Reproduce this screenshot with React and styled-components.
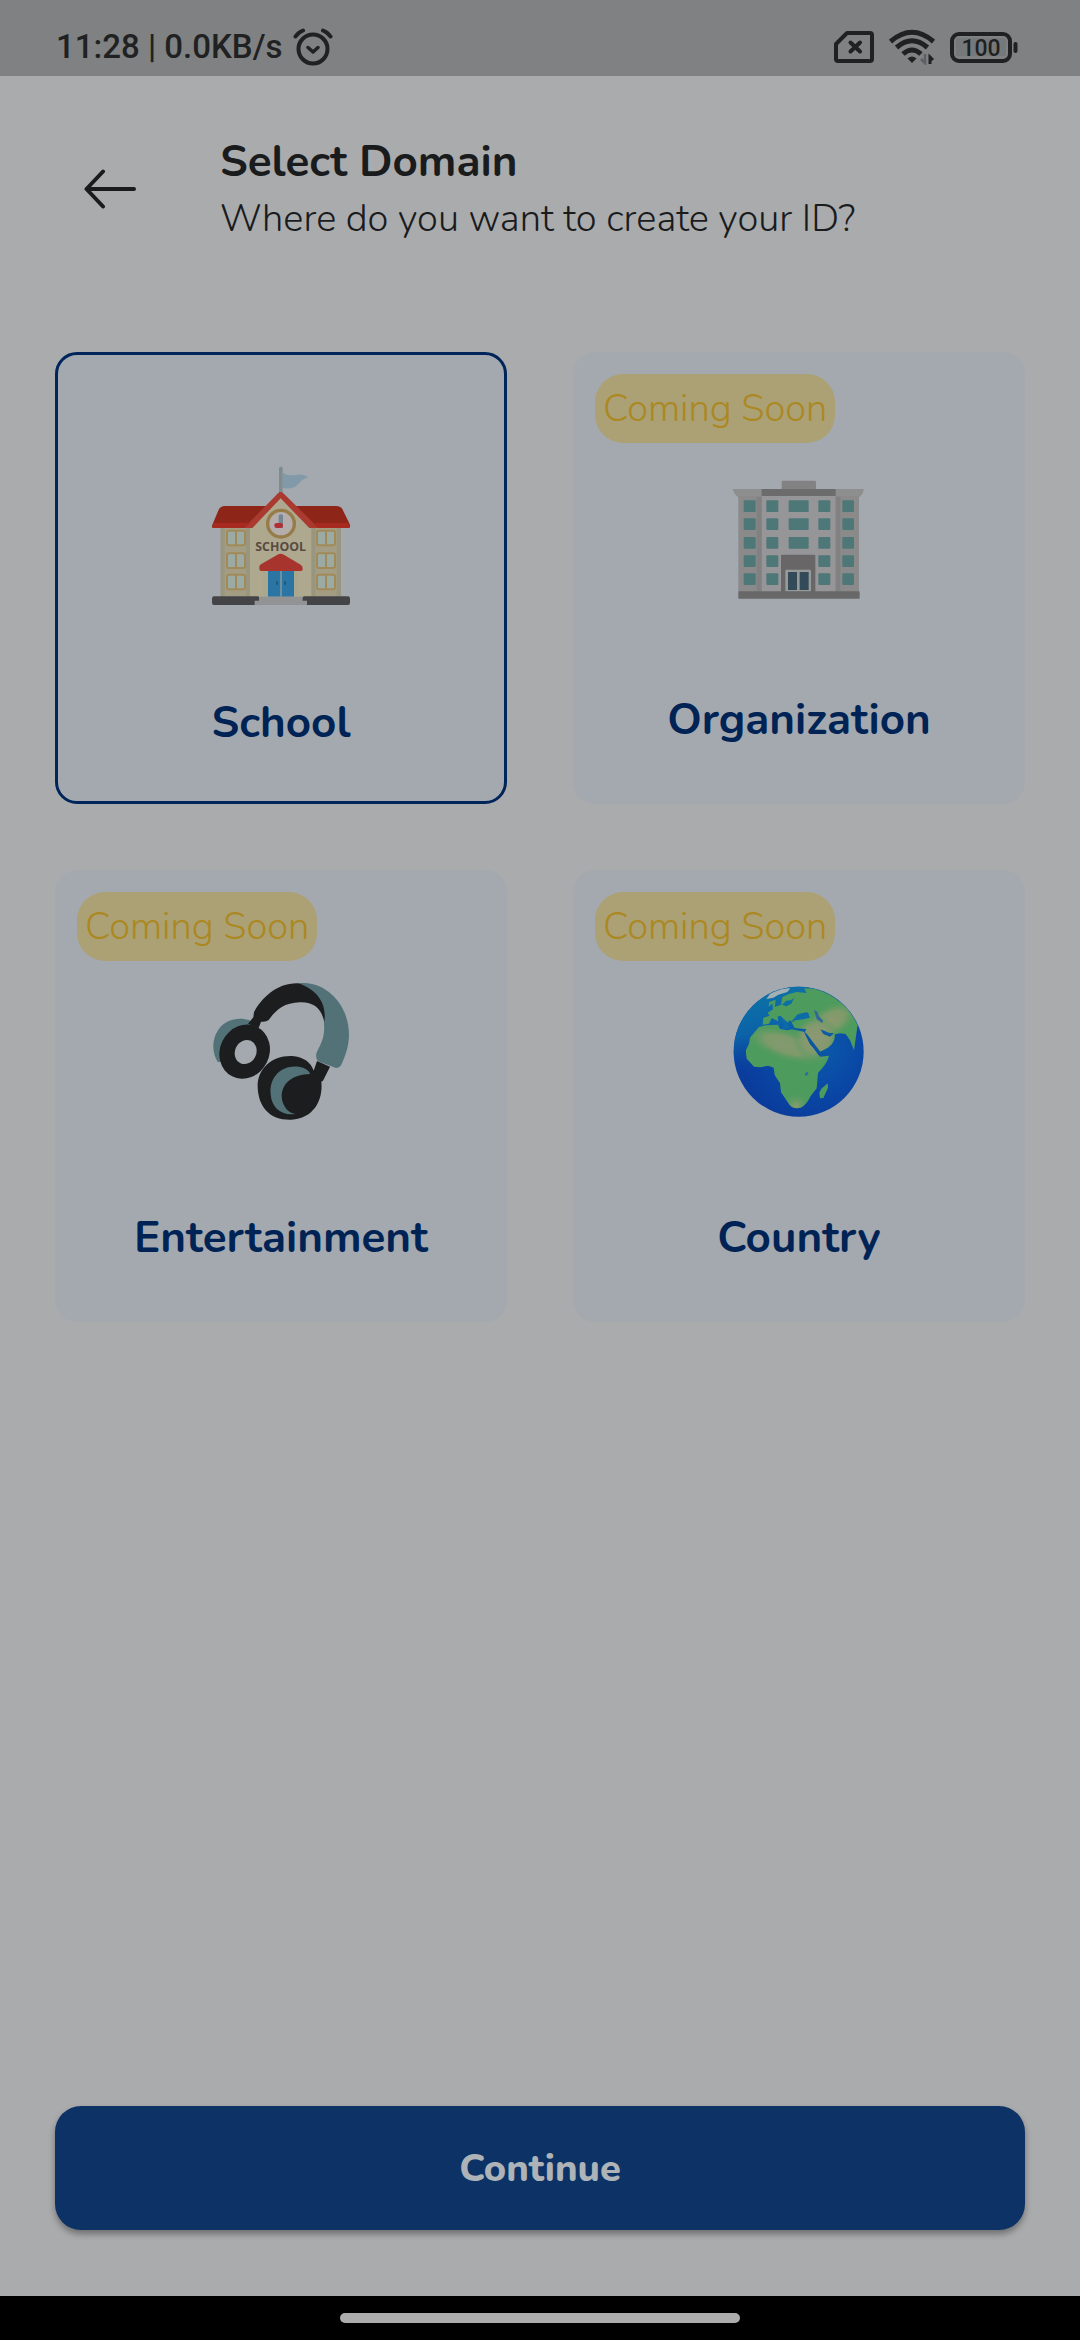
import React, { useState } from "react";
import styled, { createGlobalStyle } from "styled-components";

const GlobalStyle = createGlobalStyle`
  *, *::before, *::after { box-sizing: border-box; }
  body {
    margin: 0;
    background: #aaabad;
    font-family: Nunito, "Open Sans", "Noto Sans", sans-serif;
    color: #191b1d;
  }
  button { font: inherit; color: inherit; border: 0; background: none; padding: 0; cursor: pointer; }
`;

const Screen = styled.div`
  min-height: 100vh;
  display: flex;
  flex-direction: column;
`;

const StatusBar = styled.div`
  height: 76px;
  padding: 18px 62px 0 56px;
  display: flex;
  align-items: center;
  justify-content: space-between;
  background: #7f8182;
  color: #1f2122;
  font-family: Roboto, sans-serif;
`;

const StatusGroup = styled.div`
  display: flex;
  align-items: center;
  gap: ${(p) => p.$gap}px;
`;

const Clock = styled.span`
  font-size: 33px;
  line-height: 38px;
  font-weight: 500;
`;

const Header = styled.header`
  display: flex;
  align-items: center;
  gap: 72px;
  padding: 56px 72px 0;
`;

const BackButton = styled.button`
  display: flex;
  width: 76px;
  height: 76px;
  align-items: center;
  justify-content: center;
`;

const Title = styled.h1`
  margin: 0;
  font-size: 44px;
  line-height: 60px;
  font-weight: 700;
`;

const Subtitle = styled.p`
  margin: 0;
  font-size: 38px;
  line-height: 53px;
  font-weight: 300;
`;

const DomainGrid = styled.main`
  flex: 1;
  display: grid;
  grid-template-columns: repeat(2, minmax(0, 1fr));
  align-content: start;
  gap: 66px;
  padding: 107px 55px 66px;
`;

const Card = styled.button`
  position: relative;
  display: flex;
  flex-direction: column;
  align-items: center;
  gap: 87px;
  aspect-ratio: 1;
  && {
    padding: 111px 0 0;
    border: ${(p) => (p.$selected ? "3px solid #00255a" : "0")};
    border-radius: 22px;
    background: #a3a9af;
  }
`;

const Badge = styled.span`
  position: absolute;
  top: 22px;
  left: 22px;
  padding: 8px;
  border-radius: 28px;
  background: #aca174;
  color: #ab8822;
  font-size: 38px;
  line-height: 53px;
  font-weight: 300;
`;

const CardLabel = styled.span`
  color: #002355;
  font-size: 44px;
  line-height: 60px;
  font-weight: 700;
`;

const Footer = styled.footer`
  display: flex;
  padding: 0 55px 66px;
`;

const ContinueButton = styled.button`
  flex: 1;
  height: 124px;
  && {
    border-radius: 26px;
    background: #0c3266;
    color: #adb3b7;
    font-size: 38px;
    line-height: 53px;
    font-weight: 800;
  }
  box-shadow: 0 4px 6px rgba(0, 0, 0, 0.35);
`;

const NavBar = styled.div`
  height: 44px;
  display: flex;
  align-items: center;
  justify-content: center;
  background: #000;
`;

const HomeHandle = styled.div`
  width: 37%;
  height: 10px;
  border-radius: 5px;
  background: #acacac;
`;

const AlarmIcon = () => (
  <svg width="40" height="40" viewBox="0 0 40 40" fill="none" stroke="currentColor" strokeWidth="4" strokeLinecap="round">
    <circle cx="20" cy="22" r="14.5" />
    <path d="M2.5 9.5 Q5 5.500 10 3.500M37.500 9.500 Q35 5.500 30 3.500" />
    <path d="M15 20.500 20 25 25 20.500" strokeLinejoin="round" strokeWidth="3.500" />
  </svg>
);

const SimIcon = () => (
  <svg width="40" height="32" viewBox="0 0 40 32" fill="none" stroke="currentColor" strokeWidth="4" strokeLinejoin="round">
    <path d="M13 2H36Q38 2 38 4V28Q38 30 36 30H4Q2 30 2 28V13Z" />
    <path d="M16.500 11.500 26 20.500M26 11.500 16.500 20.500" strokeWidth="4" strokeLinecap="round" />
  </svg>
);

const WifiIcon = () => (
  <svg width="46" height="36" viewBox="0 0 46 36" fill="none" stroke="currentColor" strokeWidth="5">
    <path d="M1.500 12.500Q23 -6 44.500 12.500M7.500 18.500Q23 5 38.500 18.500M14 25Q23 17 32 25" />
    <path d="M18.500 29.500Q23 25.500 27.500 29.500L23 34Z" fill="currentColor" stroke="none" />
    <path d="M36 25V34L32 30" stroke="#5c5f65" strokeWidth="2.500" />
    <path d="M41 35V28L44 31" strokeWidth="3" />
  </svg>
);

const BatteryIcon = () => (
  <svg width="68" height="31" viewBox="0 0 68 31" fill="none">
    <rect x="6" y="6" width="50" height="18" fill="#76797a" />
    <rect x="2" y="2" width="58" height="27" rx="7" stroke="currentColor" strokeWidth="4" />
    <rect x="63.500" y="10" width="4" height="11" rx="2" fill="currentColor" />
    <text x="31" y="24" textAnchor="middle" fill="currentColor" fontFamily="Roboto, sans-serif" fontSize="23" fontWeight="500">100</text>
  </svg>
);

const ArrowIcon = () => (
  <svg width="52" height="40" viewBox="0 0 52 40" fill="none" stroke="currentColor" strokeWidth="4" strokeLinecap="round" strokeLinejoin="round">
    <path d="M50 20H2.500M19 2.500 2.500 20 19 37.500" />
  </svg>
);

const SchoolArt = () => (
  <svg width="140" height="140" viewBox="63 48 420 420">
    <path d="M267 53Q272 48 278 53V130H267Z" fill="#7d8c8f" />
    <path d="M279 68C300 84 318 70 334 74Q349 75 354 84C334 82 328 106 311 112Q294 119 279 113Z" fill="#8199a9" />
    <path d="M92 225H453V440H92Z" fill="#a39d83" />
    <path d="M272 138 374 225V440H170V225Z" fill="#aea88e" />
    <path d="M92 232H104V440H92ZM440 232H453V440H440ZM168 232H180V440H168ZM364 232H376V440H364Z" fill="#999680" />
    <path d="M104 168H230L163 234H68Q64 230 68 222L86 179Q92 168 104 168ZM316 168H438Q453 168 458 179L479 222Q482 230 478 234H382Z" fill="#8d2518" />
    <path d="M162 234 264 130Q272 122 280 130L386 234H358L272 145 187 234Z" fill="#aa3a30" />
    <path d="M68 228 72 218H181L163 234H70ZM368 219H475L479 228Q480 234 474 234H384Z" fill="#a62a20" />
    <circle cx="273" cy="221" r="40" fill="#b4adab" stroke="#967c48" strokeWidth="10" />
    <path d="M266 196Q272 190 279 196V234H266Z" fill="#718894" />
    <rect x="253" y="219" width="26" height="15" rx="7" fill="#b22e35" />
    {[242, 310, 374].map((y) =>
      [111, 381].map((x) => (
        <g key={`${x}-${y}`}>
          <rect x={x} y={y} width="54" height="44" rx="6" fill="#9caaa4" stroke="#a18a57" strokeWidth="6" />
          <path d={`M${x + 27} ${y}V${y + 44}`} stroke="#a18a57" strokeWidth="6" />
        </g>
      ))
    )}
    <text x="272" y="303" textAnchor="middle" fill="#584a41" fontFamily="Open Sans, sans-serif" fontWeight="700" fontSize="37">SCHOOL</text>
    <rect x="220" y="358" width="106" height="82" fill="#aaa78f" />
    <rect x="234" y="358" width="78" height="82" fill="#2b75a5" />
    <path d="M273 358V440" stroke="#7a969f" strokeWidth="5" />
    <path d="M261 394V404M285 394V404" stroke="#205475" strokeWidth="5" />
    <path d="M208 350Q208 346 214 342L265 313Q272 309 279 313L332 344Q338 348 338 355V358Q338 363 333 363H214Q208 363 208 357Z" fill="#a8352d" />
    <path d="M72 439H203Q208 439 208 444V465H72Q66 465 66 458V446Q66 439 72 439ZM343 439H474Q480 439 480 446V458Q480 465 474 465H337V444Q337 439 343 439Z" fill="#444446" />
    <path d="M208 440H337V452H351V465H194V452H208Z" fill="#929395" />
  </svg>
);

const windowColumns = [
  { x: 86, w: 36 },
  { x: 154, w: 36 },
  { x: 310, w: 36 },
  { x: 382, w: 35 },
];

const OfficeArt = () => (
  <svg width="140" height="140" viewBox="42 9 420 420">
    <rect x="200" y="62" width="103" height="30" rx="4" fill="#828283" />
    <path d="M54 87H446Q444 103 432 112V396H70V112Q57 103 54 87Z" fill="#8a8a8b" />
    <rect x="140" y="108" width="222" height="288" fill="#969698" />
    <path d="M125 110H140V394H125ZM362 110H376V394H362Z" fill="#828182" />
    <path d="M54 87H140V108H68Q57 101 54 87ZM362 87H446Q443 101 432 108H362Z" fill="#8f8e8e" />
    <rect x="140" y="87" width="222" height="21" fill="#6c6c6c" />
    {windowColumns.map(({ x, w }) =>
      [121, 175, 231, 286, 340].map((y) => (
        <rect key={`${x}-${y}`} x={x} y={y} width={w} height="35" rx="3" fill="#4e7778" />
      ))
    )}
    {[121, 175, 231].map((y) => (
      <rect key={y} x="221" y={y} width="60" height="35" rx="2" fill="#4e7778" />
    ))}
    <rect x="198" y="284" width="103" height="112" rx="3" fill="#696668" />
    <rect x="211" y="329" width="77" height="66" rx="3" fill="#969a99" />
    <rect x="219" y="336" width="27" height="54" fill="#334a59" />
    <rect x="254" y="336" width="27" height="54" fill="#334a59" />
    <rect x="70" y="394" width="364" height="22" rx="2" fill="#686868" />
  </svg>
);

const HeadphonesArt = () => (
  <svg width="140" height="140" viewBox="63 63 420 420">
    <path d="M84 307C66 280 64 240 85 209C106 178 145 170 180 181L190 198L105 300Z" fill="#527278" />
    <path d="M192 156C215 115 260 68 325 70C380 74 407 112 411 170L405 205C402 150 374 125 330 127C280 128 257 152 236 180Q228 187 213 185L206 204L174 191L190 172Z" fill="#1c1d1e" />
    <path d="M325 70C388 60 443 107 464 158C488 220 475 270 453 316Q448 325 438 324L388 305Q376 300 379 280C389 257 406 237 402 190C414 130 378 87 325 70Z" fill="#527278" />
    <ellipse cx="164" cy="275" rx="74" ry="83" fill="#1c1d1e" transform="rotate(27 164 275)" />
    <ellipse cx="167" cy="276" rx="32" ry="37" fill="#a3a9af" transform="rotate(25 167 276)" />
    <path d="M381 303 420 320 399 362 383 371 359 344 372 329Z" fill="#1c1d1e" />
    <path d="M203 380C202 326 246 286 306 288C341 290 364 309 370 330L394 365C400 423 368 476 304 479C240 481 205 442 203 380Z" fill="#1c1d1e" />
    <path d="M242 402C237 348 278 314 326 320Q356 325 360 342C310 343 277 367 275 407C275 433 292 459 316 462C274 468 244 443 242 402Z" fill="#527278" />
  </svg>
);

const GlobeArt = () => (
  <svg width="140" height="140" viewBox="57 63 420 420">
    <defs>
      <radialGradient id="ocean" cx="320" cy="260" r="230" gradientUnits="userSpaceOnUse">
        <stop offset="0" stopColor="#0b5bab" />
        <stop offset="0.55" stopColor="#0a49a6" />
        <stop offset="1" stopColor="#0a3c9c" />
      </radialGradient>
      <linearGradient id="shallows" x1="150" y1="90" x2="220" y2="310" gradientUnits="userSpaceOnUse">
        <stop offset="0" stopColor="#0d74a5" />
        <stop offset="0.5" stopColor="#0c6bab" stopOpacity="0.8" />
        <stop offset="1" stopColor="#0a49a6" stopOpacity="0" />
      </linearGradient>
      <radialGradient id="sahara" cx="0" cy="0" r="1" gradientTransform="translate(230 255) rotate(18) scale(135 48)" gradientUnits="userSpaceOnUse">
        <stop offset="0" stopColor="#859971" />
        <stop offset="0.5" stopColor="#7d9a6a" />
        <stop offset="1" stopColor="#4e9b5e" stopOpacity="0" />
      </radialGradient>
      <radialGradient id="steppe" cx="0" cy="0" r="1" gradientTransform="translate(362 184) rotate(-30) scale(95 50)" gradientUnits="userSpaceOnUse">
        <stop offset="0" stopColor="#8d9a70" />
        <stop offset="0.5" stopColor="#7d9a68" />
        <stop offset="1" stopColor="#4e9b5e" stopOpacity="0" />
      </radialGradient>
      <radialGradient id="arabia" cx="318" cy="235" r="70" gradientUnits="userSpaceOnUse">
        <stop offset="0" stopColor="#8d9873" />
        <stop offset="0.6" stopColor="#83996d" />
        <stop offset="1" stopColor="#4e9b5e" stopOpacity="0" />
      </radialGradient>
      <radialGradient id="cape" cx="258" cy="438" r="42" gradientUnits="userSpaceOnUse">
        <stop offset="0" stopColor="#8b9c70" />
        <stop offset="1" stopColor="#4e9b5e" stopOpacity="0" />
      </radialGradient>
      <clipPath id="disc"><circle cx="266" cy="275" r="194" /></clipPath>
      <clipPath id="land">
        <path d="M147 201 168 196 204 194 210 207 232 211 245 208 280 215 287 221 305 257 325 286 338 287 357 286C352 310 337 324 324 339L320 385 302 408C293 426 280 446 260 445Q242 443 235 429L213 397 210 370 194 345 191 323 174 317 151 322 132 320 110 296 107 272 117 251 120 233Z" />
        <path d="M158 194 160 173 179 167 173 158 189 148 187 130 176 140 178 126 197 119 194 141 213 134 217 111 237 102 260 96 290 99 282 85 320 85 380 105 450 170 442 201 432 271 420 241 407 222 390 220 374 223C376 242 365 257 350 265L328 276 304 243 285 215 290 207 254 204 244 185 255 184 249 179 259 163 298 162 290 157 262 163 246 183 236 182 235 188 222 185 212 169 203 170 205 184 185 174 177 191Z" />
        <path d="M353 370 354 383 340 414 330 415 328 398 334 386Z" />
      </clipPath>
    </defs>
    <circle cx="266" cy="275" r="195" fill="url(#ocean)" />
    <circle cx="266" cy="275" r="195" fill="url(#shallows)" />
    <g clipPath="url(#disc)">
      <path d="M160 106 196 86 241 85 232 96 205 104 190 113 169 117 180 102Z" fill="#a4afb4" />
      <g clipPath="url(#land)">
        <rect x="70" y="80" width="400" height="400" fill="#4e9b5e" />
        <rect x="70" y="80" width="400" height="400" fill="url(#sahara)" />
        <rect x="70" y="80" width="400" height="400" fill="url(#steppe)" />
        <rect x="70" y="80" width="400" height="400" fill="url(#arabia)" />
        <rect x="70" y="80" width="400" height="400" fill="url(#cape)" />
      </g>
      <path d="M216 134 229 122 242 121 253 113 244 131 229 139Z" fill="#0d70a3" />
      <path d="M248 180 263 163 295 161 300 173 283 177 259 181Z" fill="#0d6ba7" />
      <path d="M312 150 322 155 327 169 340 183 336 189 320 178Z" fill="#33679a" />
      <path d="M283 218 290 221 309 247 331 275 358 280 357 287 330 290 313 267 300 253Z" fill="#0b56a2" />
      <path d="M331 208 346 214 356 218 372 220 360 230 340 222Z" fill="#0b5ba5" />
      <path d="M286 338 294 336 295 344 285 348Z" fill="#286e9f" />
      <path d="M204 169 212 168 232 187 240 205 228 208 213 205 223 195Z" fill="#0c6aa8" />
    </g>
  </svg>
);

const domains = [
  { name: "School", Art: SchoolArt },
  { name: "Organization", Art: OfficeArt, comingSoon: true },
  { name: "Entertainment", Art: HeadphonesArt, comingSoon: true },
  { name: "Country", Art: GlobeArt, comingSoon: true },
];

export default function App() {
  const [selected, setSelected] = useState("School");

  return (
    <Screen>
      <GlobalStyle />
      <StatusBar>
        <StatusGroup $gap={10}>
          <Clock>11:28 | 0.0KB/s</Clock>
          <AlarmIcon />
        </StatusGroup>
        <StatusGroup $gap={15}>
          <SimIcon />
          <WifiIcon />
          <BatteryIcon />
        </StatusGroup>
      </StatusBar>
      <Header>
        <BackButton type="button" aria-label="Back">
          <ArrowIcon />
        </BackButton>
        <div>
          <Title>Select Domain</Title>
          <Subtitle>Where do you want to create your ID?</Subtitle>
        </div>
      </Header>
      <DomainGrid>
        {domains.map(({ name, Art, comingSoon }) => (
          <Card
            key={name}
            type="button"
            $selected={selected === name}
            aria-pressed={selected === name}
            onClick={() => !comingSoon && setSelected(name)}
          >
            {comingSoon && <Badge>Coming Soon</Badge>}
            <Art />
            <CardLabel>{name}</CardLabel>
          </Card>
        ))}
      </DomainGrid>
      <Footer>
        <ContinueButton type="button">Continue</ContinueButton>
      </Footer>
      <NavBar>
        <HomeHandle />
      </NavBar>
    </Screen>
  );
}
